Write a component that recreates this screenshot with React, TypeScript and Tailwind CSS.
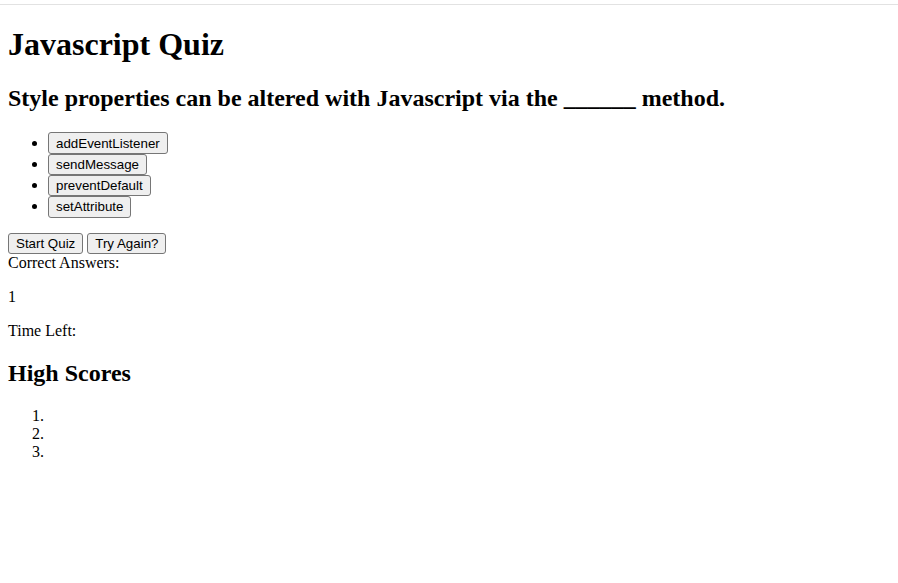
export default function App() {
  const btn =
    "inline-block align-baseline h-[21.33px] px-[7px] py-[2px] border border-[#767676] rounded-[3px] bg-[#efefef] text-black font-['Liberation_Sans',Arial,sans-serif] text-[13.33px] leading-[normal]";
  return (
    <div className="min-h-[583px] bg-white text-black font-['Liberation_Serif','Times_New_Roman',serif] text-[16px] leading-[normal]">
      <div className="h-[4px]" />
      <div className="h-px bg-[#e2e2e2]" />
      <div className="px-[8px] pb-[20px]">
        <h1 className="mt-[21px] mb-[22.44px] text-[32px] font-bold leading-[normal]">Javascript Quiz</h1>
        <h2 className="mt-0 mb-[19.92px] text-[24px] font-bold leading-[normal]">
          Style properties can be altered with Javascript via the ______ method.
        </h2>
        <ul className="list-disc pl-[40px] mt-[18px] mb-[15px]">
          <li className="leading-[normal]">
            <button className={btn}>addEventListener</button>
          </li>
          <li className="leading-[normal]">
            <button className={btn}>sendMessage</button>
          </li>
          <li className="leading-[normal]">
            <button className={btn}>preventDefault</button>
          </li>
          <li className="leading-[normal]">
            <button className={btn}>setAttribute</button>
          </li>
        </ul>
        <div>
          <button className={btn}>Start Quiz</button>{" "}
          <button className={btn}>Try Again?</button>
        </div>
        <div>Correct Answers:</div>
        <p className="my-[16px]">1</p>
        <p className="my-[16px]">Time Left:</p>
        <h2 className="mt-[19.92px] mb-[19.92px] text-[24px] font-bold leading-[normal]">High Scores</h2>
        <ol className="list-decimal pl-[40px] mt-[13px] mb-[16px]">
          <li>{"\u00A0"}</li>
          <li>{"\u00A0"}</li>
          <li>{"\u00A0"}</li>
        </ol>
      </div>
    </div>
  );
}
